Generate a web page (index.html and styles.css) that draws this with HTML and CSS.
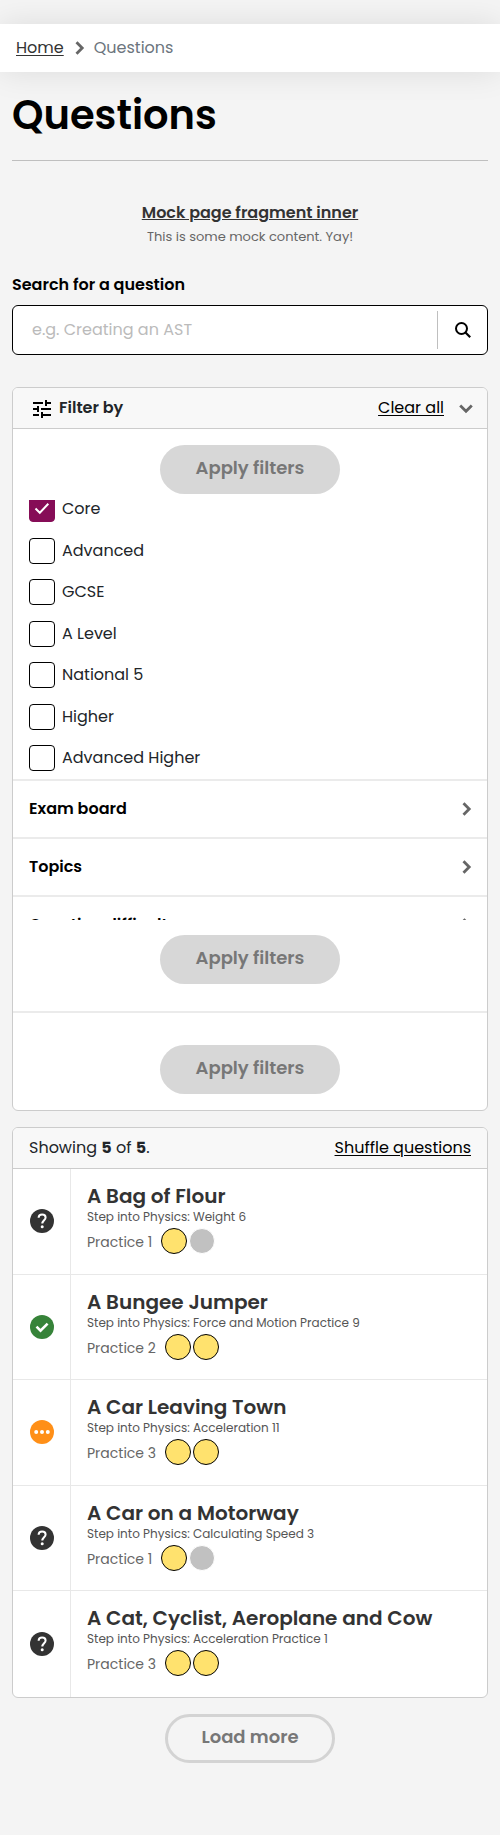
FILE: index.html
```
<!DOCTYPE html>
<html lang="en">
<head>
<meta charset="utf-8">
<meta name="viewport" content="width=device-width, initial-scale=1">
<title>Questions</title>
<link rel="stylesheet" href="styles.css">
</head>
<body>
<svg class="sprite" aria-hidden="true">
  <symbol id="chevron" viewBox="0 0 14 14"><path d="M4.500 1.200 10.200 7 4.500 12.800" fill="none" stroke="#666" stroke-width="2.800"/></symbol>
  <symbol id="unknown" viewBox="0 0 24 24"><circle cx="12" cy="12" r="12" fill="#333"/><path d="M8.600 8.700C8.700 6.600 10.200 5.500 12.100 5.500c2 0 3.500 1.100 3.500 2.900 0 2.700-3.300 3-3.300 6.200" fill="none" stroke="#fff" stroke-width="2"/><circle cx="12.200" cy="17.700" r="1.500" fill="#fff"/></symbol>
  <symbol id="correct" viewBox="0 0 24 24"><circle cx="12" cy="12" r="12" fill="#368339"/><path d="m6.500 11.700 4 4L17.600 8.600" fill="none" stroke="#fff" stroke-width="2.600"/></symbol>
  <symbol id="progress" viewBox="0 0 24 24"><circle cx="12" cy="12" r="12" fill="#ff8f17"/><circle cx="6.200" cy="12" r="2" fill="#fff"/><circle cx="12" cy="12" r="2" fill="#fff"/><circle cx="17.800" cy="12" r="2" fill="#fff"/></symbol>
</svg>

<nav class="breadcrumb" aria-label="Breadcrumb">
  <a href="#home">Home</a>
  <svg class="chevron"><use href="#chevron"/></svg>
  <span class="current">Questions</span>
</nav>

<main class="page">
  <h1 class="title">Questions</h1>
  <section class="fragment">
    <h2 class="fragment-title">Mock page fragment inner</h2>
    <p class="fragment-text">This is some mock content. Yay!</p>
  </section>

  <form class="search">
    <label class="search-label" for="search">Search for a question</label>
    <div class="search-box">
      <input class="search-input" id="search" type="text" placeholder="e.g. Creating an AST">
      <button class="search-button" type="button" aria-label="Search">
        <svg class="search-icon" viewBox="0 0 16 16"><circle cx="6.500" cy="6.500" r="5.500" fill="none" stroke="#000" stroke-width="2"/><path d="m10.500 10.500 4.700 4.700" stroke="#000" stroke-width="2.200"/></svg>
      </button>
    </div>
  </form>

  <section class="card">
    <header class="card-header">
      <svg class="tune" viewBox="0 0 18 18"><path d="M0 3h10M12 3h6M13 0v6M0 9h4M8 9h10M5 6v6M0 15h6M8 15h10M9 12v6" fill="none" stroke="#000" stroke-width="2"/></svg>
      <span class="filter-title">Filter by</span>
      <button class="link-button" type="button">Clear all</button>
      <button class="toggle" type="button" aria-label="Collapse filters"><svg class="chevron chevron-down"><use href="#chevron"/></svg></button>
    </header>
    <div class="apply apply-top"><button class="pill" type="button" disabled>Apply filters</button></div>
    <div class="filter-scroll">
      <div class="options">
        <label class="option"><input class="check" type="checkbox" checked>Core</label>
        <label class="option"><input class="check" type="checkbox">Advanced</label>
        <label class="option"><input class="check" type="checkbox">GCSE</label>
        <label class="option"><input class="check" type="checkbox">A Level</label>
        <label class="option"><input class="check" type="checkbox">National 5</label>
        <label class="option"><input class="check" type="checkbox">Higher</label>
        <label class="option"><input class="check" type="checkbox">Advanced Higher</label>
      </div>
      <button class="group" type="button">Exam board<svg class="chevron"><use href="#chevron"/></svg></button>
      <button class="group" type="button">Topics<svg class="chevron"><use href="#chevron"/></svg></button>
      <button class="group" type="button">Question difficulty<svg class="chevron"><use href="#chevron"/></svg></button>
    </div>
    <div class="apply apply-middle"><button class="pill" type="button" disabled>Apply filters</button></div>
    <div class="apply apply-bottom"><button class="pill" type="button" disabled>Apply filters</button></div>
  </section>

  <section class="card results">
    <header class="card-header">
      <span>Showing <b>5</b> of <b>5</b>.</span>
      <button class="link-button" type="button">Shuffle questions</button>
    </header>
    <ul class="list">
      <li class="item">
        <div class="status"><svg class="status-icon"><use href="#unknown"/></svg></div>
        <div class="details">
          <a class="name" href="#q1">A Bag of Flour</a>
          <span class="topic">Step into Physics: Weight 6</span>
          <span class="level">Practice 1 <span class="dots"><i class="dot dot-on"></i><i class="dot"></i></span></span>
        </div>
      </li>
      <li class="item">
        <div class="status"><svg class="status-icon"><use href="#correct"/></svg></div>
        <div class="details">
          <a class="name" href="#q2">A Bungee Jumper</a>
          <span class="topic">Step into Physics: Force and Motion Practice 9</span>
          <span class="level">Practice 2 <span class="dots"><i class="dot dot-on"></i><i class="dot dot-on"></i></span></span>
        </div>
      </li>
      <li class="item">
        <div class="status"><svg class="status-icon"><use href="#progress"/></svg></div>
        <div class="details">
          <a class="name" href="#q3">A Car Leaving Town</a>
          <span class="topic">Step into Physics: Acceleration 11</span>
          <span class="level">Practice 3 <span class="dots"><i class="dot dot-on"></i><i class="dot dot-on"></i></span></span>
        </div>
      </li>
      <li class="item">
        <div class="status"><svg class="status-icon"><use href="#unknown"/></svg></div>
        <div class="details">
          <a class="name" href="#q4">A Car on a Motorway</a>
          <span class="topic">Step into Physics: Calculating Speed 3</span>
          <span class="level">Practice 1 <span class="dots"><i class="dot dot-on"></i><i class="dot"></i></span></span>
        </div>
      </li>
      <li class="item">
        <div class="status"><svg class="status-icon"><use href="#unknown"/></svg></div>
        <div class="details">
          <a class="name" href="#q5">A Cat, Cyclist, Aeroplane and Cow</a>
          <span class="topic">Step into Physics: Acceleration Practice 1</span>
          <span class="level">Practice 3 <span class="dots"><i class="dot dot-on"></i><i class="dot dot-on"></i></span></span>
        </div>
      </li>
    </ul>
  </section>
  <div class="more"><button class="pill pill-outline" type="button" disabled>Load more</button></div>
</main>
</body>
</html>
```
FILE: styles.css
```
* { box-sizing: border-box; }
body {
  margin: 0;
  padding: 24px 0 72px;
  background: #f4f4f4;
  color: #212529;
  font: 16px/24px Poppins, Inter, "Open Sans", sans-serif;
}
button, input { font: inherit; color: inherit; margin: 0; }
button { padding: 0; border: 0; background: none; }
h1, h2, p, ul { margin: 0; padding: 0; }
.sprite { display: none; }

.breadcrumb {
  display: flex;
  align-items: center;
  gap: 8px;
  height: 48px;
  padding: 0 16px;
  background: #fff;
  box-shadow: 0 0 32px rgba(0, 0, 0, 0.1);
}
.breadcrumb a { color: #333; text-underline-offset: 2px; }
.current { color: #6c757d; }
.chevron { flex: none; width: 14px; height: 14px; }
.chevron-down { transform: rotate(90deg); }

.page { padding: 0 12px; }
.title {
  padding: 16px 0 18px;
  border-bottom: 1px solid #bfbfbf;
  color: #000;
  font-size: 40px;
  font-weight: 600;
  line-height: 54px;
}
.fragment { padding: 40px 0 24px; text-align: center; }
.fragment-title {
  color: #333;
  font-size: 16px;
  font-weight: 600;
  line-height: 24px;
  text-decoration: underline;
}
.fragment-text { color: #666; font-size: 13px; }
.search { padding-bottom: 32px; }
.search-label { display: block; padding-bottom: 8px; color: #000; font-weight: 600; }
.search-box {
  display: flex;
  align-items: center;
  height: 50px;
  border: 1px solid #000;
  border-radius: 6px;
  background: #fff;
}
.search-input {
  flex: 1;
  min-width: 0;
  padding: 0 19px;
  border: 0;
  outline: 0;
  background: transparent;
}
.search-input::placeholder { color: #bbb; }
.search-button {
  display: flex;
  align-items: center;
  justify-content: center;
  width: 50px;
  height: 38px;
  border-left: 1px solid #bfbfbf;
}
.search-icon { width: 16px; height: 16px; }

.card {
  border: 1px solid #ccc;
  border-radius: 6px;
  background: #fff;
  overflow: hidden;
}
.card-header {
  display: flex;
  align-items: center;
  height: 41px;
  padding: 0 16px;
  border-bottom: 1px solid #ccc;
  background: #f8f8f8;
}
.tune { width: 18px; height: 18px; margin: 2px 8px 0 4px; }
.filter-title { font-weight: 600; }
.link-button {
  margin-left: auto;
  color: #000;
  text-decoration: underline;
  text-underline-offset: 2px;
}
.toggle { display: flex; margin: 0 -2px 0 15px; }
.apply { display: flex; justify-content: center; }
.apply-top { padding: 16px 0 6px; }
.apply-middle { padding: 15px 0 27px; }
.apply-bottom { padding: 32px 0 16px; border-top: 2px solid #ebebeb; }
.pill {
  width: 180px;
  height: 49px;
  padding-bottom: 4px;
  border-radius: 25px;
  background: #d7d7d7;
  color: #777;
  font-size: 18px;
  font-weight: 600;
}
.pill-outline { width: 170px; border: 3px solid #d3d3d3; background: transparent; }

/* The filter list is shown part-way through its content. */
.filter-scroll { height: 420px; overflow: hidden; }
.options {
  display: flex;
  flex-direction: column;
  justify-content: space-between;
  height: 283px;
  margin-top: -4px;
  padding: 0 16px 8px;
}
.option { display: flex; align-items: center; gap: 7px; }
.check {
  appearance: none;
  flex: none;
  width: 26px;
  height: 26px;
  margin: 0;
  border: 1px solid #000;
  border-radius: 4px;
  background: #fff;
}
.check:checked {
  border-color: #860d57;
  background: #860d57 url("data:image/svg+xml,%3Csvg xmlns='http://www.w3.org/2000/svg' viewBox='0 0 24 24'%3E%3Cpath d='m5.500 11.500 4.300 4.300 8.500-9' fill='none' stroke='white' stroke-width='2'/%3E%3C/svg%3E") center / 24px 24px no-repeat;
}
.group {
  display: flex;
  align-items: center;
  justify-content: space-between;
  width: 100%;
  height: 58px;
  padding: 0 14px 0 16px;
  border-top: 2px solid #ebebeb;
  color: #000;
  font-weight: 600;
}

.results { margin-top: 16px; }
.list {
  display: grid;
  grid-auto-rows: 1fr;
  min-height: 528px;
  list-style: none;
}
.item { display: flex; }
.item:not(:last-child) { border-bottom: 1px solid #e8e8e8; }
.status {
  display: flex;
  flex: none;
  align-items: center;
  justify-content: center;
  width: 58px;
  border-right: 1px solid #e8e8e8;
}
.status-icon { width: 24px; height: 24px; }
.details {
  display: flex;
  flex-direction: column;
  min-width: 0;
  padding: 15px 16px 0;
}
.name {
  color: #333;
  font-size: 20px;
  font-weight: 600;
  line-height: 24px;
  text-decoration: none;
}
.topic { color: #555; font-size: 12px; line-height: 18px; }
.level { display: flex; gap: 9px; color: #666; font-size: 14px; line-height: 32px; }
.dots { display: flex; gap: 2px; padding-top: 2px; }
.dot { width: 26px; height: 26px; border: 1px solid #fff; border-radius: 50%; background: #c1c1c1; }
.dot-on { border-color: #000; background: #ffe26e; }
.more { display: flex; justify-content: center; padding-top: 16px; }
```
